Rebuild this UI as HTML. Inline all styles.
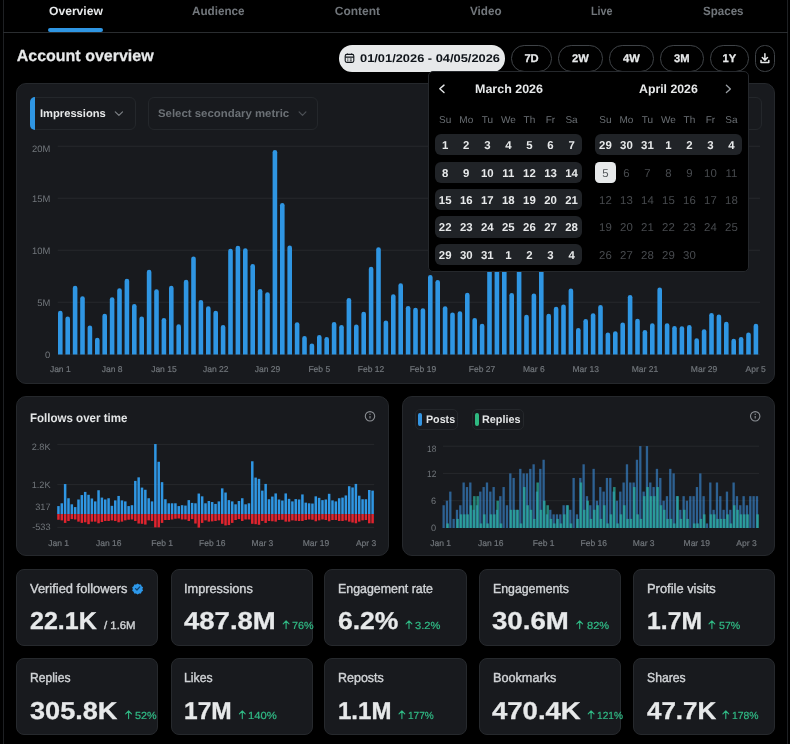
<!DOCTYPE html>
<html lang="en">
<head>
<meta charset="utf-8">
<title>Account overview</title>
<style>
html,body{margin:0;padding:0;background:#000;}
body{width:790px;height:744px;position:relative;overflow:hidden;font-family:'Liberation Sans', Arial, sans-serif;}
.b{position:absolute;box-sizing:border-box;}
.t{position:absolute;white-space:nowrap;line-height:1;transform-origin:0 50%;text-rendering:geometricPrecision;}
main{will-change:transform;}
svg{position:absolute;left:0;top:0;overflow:visible;}
</style>
</head>
<body>
<main>
<div class="b" style="left:3.00px;top:0.00px;width:1.00px;height:744.00px;background:#1e2023;"></div>
<div class="b" style="left:787.00px;top:0.00px;width:1.00px;height:744.00px;background:#1e2023;"></div>
<div class="b" style="left:3.00px;top:31.50px;width:785.00px;height:1.00px;background:#2a2d30;"></div>
<div class="b" style="left:48.40px;top:27.80px;width:54.30px;height:4.20px;background:#2f96e3;border-radius:2.1px;"></div>
<div class="b" style="left:338.70px;top:45.30px;width:166.00px;height:26.40px;background:#e7e9ea;border-radius:13.2px;"></div>
<div class="b" style="left:510.70px;top:45.30px;width:41.70px;height:26.40px;border-radius:13.2px;border:1px solid #3f4347;box-sizing:border-box;"></div>
<div class="b" style="left:557.80px;top:45.30px;width:45.10px;height:26.40px;border-radius:13.2px;border:1px solid #3f4347;box-sizing:border-box;"></div>
<div class="b" style="left:608.80px;top:45.30px;width:45.20px;height:26.40px;border-radius:13.2px;border:1px solid #3f4347;box-sizing:border-box;"></div>
<div class="b" style="left:659.90px;top:45.30px;width:43.70px;height:26.40px;border-radius:13.2px;border:1px solid #3f4347;box-sizing:border-box;"></div>
<div class="b" style="left:709.50px;top:45.30px;width:39.70px;height:26.40px;border-radius:13.2px;border:1px solid #3f4347;box-sizing:border-box;"></div>
<div class="b" style="left:755.00px;top:45.30px;width:19.90px;height:26.40px;border-radius:9.5px;border:1px solid #3f4347;box-sizing:border-box;"></div>
<div class="b" style="left:16.20px;top:83.20px;width:758.50px;height:300.60px;background:#181a1e;border-radius:10px;border:1px solid #25282c;"></div>
<div class="b" style="left:29.90px;top:97.10px;width:105.80px;height:32.70px;border-radius:6px;border:1px solid #24272b;box-sizing:border-box;"></div>
<div class="b" style="left:29.90px;top:97.10px;width:5.30px;height:32.70px;background:#2f96e3;border-radius:6px 0 0 6px;"></div>
<div class="b" style="left:148.10px;top:97.10px;width:170.10px;height:32.70px;border-radius:6px;border:1px solid #24272b;box-sizing:border-box;"></div>
<div class="b" style="left:700.00px;top:97.10px;width:61.80px;height:32.70px;border-radius:6px;border:1px solid #24272b;box-sizing:border-box;"></div>
<div class="b" style="left:16.20px;top:396.10px;width:372.60px;height:160.10px;background:#181a1e;border-radius:10px;border:1px solid #25282c;"></div>
<div class="b" style="left:402.30px;top:396.10px;width:372.40px;height:160.10px;background:#181a1e;border-radius:10px;border:1px solid #25282c;"></div>
<div class="b" style="left:415.10px;top:409.10px;width:43.40px;height:20.70px;border-radius:5px;border:1px solid #24272b;box-sizing:border-box;"></div>
<div class="b" style="left:418.40px;top:412.60px;width:3.90px;height:13.40px;background:#3495e2;border-radius:1.9px;"></div>
<div class="b" style="left:472.00px;top:409.10px;width:51.80px;height:20.70px;border-radius:5px;border:1px solid #24272b;box-sizing:border-box;"></div>
<div class="b" style="left:474.90px;top:412.60px;width:3.90px;height:13.40px;background:#2fb981;border-radius:1.9px;"></div>
<div class="b" style="left:16.10px;top:569.20px;width:141.60px;height:76.40px;background:#181a1e;border-radius:8px;border:1px solid #26292d;box-sizing:border-box;"></div>
<div class="b" style="left:171.10px;top:569.20px;width:141.50px;height:76.40px;background:#181a1e;border-radius:8px;border:1px solid #26292d;box-sizing:border-box;"></div>
<div class="b" style="left:324.40px;top:569.20px;width:142.40px;height:76.40px;background:#181a1e;border-radius:8px;border:1px solid #26292d;box-sizing:border-box;"></div>
<div class="b" style="left:478.90px;top:569.20px;width:142.20px;height:76.40px;background:#181a1e;border-radius:8px;border:1px solid #26292d;box-sizing:border-box;"></div>
<div class="b" style="left:633.00px;top:569.20px;width:141.80px;height:76.40px;background:#181a1e;border-radius:8px;border:1px solid #26292d;box-sizing:border-box;"></div>
<div class="b" style="left:16.10px;top:658.30px;width:141.60px;height:76.70px;background:#181a1e;border-radius:8px;border:1px solid #26292d;box-sizing:border-box;"></div>
<div class="b" style="left:171.10px;top:658.30px;width:141.50px;height:76.70px;background:#181a1e;border-radius:8px;border:1px solid #26292d;box-sizing:border-box;"></div>
<div class="b" style="left:324.40px;top:658.30px;width:142.40px;height:76.70px;background:#181a1e;border-radius:8px;border:1px solid #26292d;box-sizing:border-box;"></div>
<div class="b" style="left:478.90px;top:658.30px;width:142.20px;height:76.70px;background:#181a1e;border-radius:8px;border:1px solid #26292d;box-sizing:border-box;"></div>
<div class="b" style="left:633.00px;top:658.30px;width:141.80px;height:76.70px;background:#181a1e;border-radius:8px;border:1px solid #26292d;box-sizing:border-box;"></div>
<svg width="790" height="744" viewBox="0 0 790 744">
<g transform="translate(344.4,53)" fill="none" stroke="#0f1419" stroke-width="1.1"><rect x="0.8" y="1.4" width="8.6" height="8" rx="1.6"/><path d="M0.8 4.1H9.4M3 0.4V2M7.2 0.4V2" /><path d="M2.8 6H4M5.4 6H7.4M2.8 7.8H4M5.4 7.8H7.4" stroke-width="0.9"/></g>
<g transform="translate(764.9,58.3)" fill="none" stroke="#e7e9ea" stroke-width="1.5" stroke-linecap="round" stroke-linejoin="round"><path d="M0 -4.6V1.6M-2.6 -0.8L0 1.8L2.6 -0.8M-3.9 2.2V4.2H3.9V2.2"/></g>
<path d="M115.3 111.9L118.9 115.4L122.5 111.9" fill="none" stroke="#7d8186" stroke-width="1.2" stroke-linecap="round" stroke-linejoin="round"/>
<path d="M299.1 111.9L302.5 115.3L305.9 111.9" fill="none" stroke="#4c5055" stroke-width="1.2" stroke-linecap="round" stroke-linejoin="round"/>
<rect x="57.7" y="145.75" width="702.3" height="1" fill="#26282c"/>
<rect x="57.7" y="197.75" width="702.3" height="1" fill="#26282c"/>
<rect x="57.7" y="249.75" width="702.3" height="1" fill="#26282c"/>
<rect x="57.7" y="301.75" width="702.3" height="1" fill="#26282c"/>
<rect x="57.7" y="353.75" width="702.3" height="1" fill="#26282c"/>
<path d="M58.00 354.6V313.05a2.30 2.30 0 0 1 4.60 0V354.6Z" fill="#2f96e3"/>
<path d="M65.40 354.6V318.80a2.30 2.30 0 0 1 4.60 0V354.6Z" fill="#2f96e3"/>
<path d="M72.80 354.6V288.05a2.30 2.30 0 0 1 4.60 0V354.6Z" fill="#2f96e3"/>
<path d="M80.20 354.6V298.55a2.30 2.30 0 0 1 4.60 0V354.6Z" fill="#2f96e3"/>
<path d="M87.60 354.6V327.80a2.30 2.30 0 0 1 4.60 0V354.6Z" fill="#2f96e3"/>
<path d="M95.00 354.6V340.05a2.30 2.30 0 0 1 4.60 0V354.6Z" fill="#2f96e3"/>
<path d="M102.40 354.6V316.05a2.30 2.30 0 0 1 4.60 0V354.6Z" fill="#2f96e3"/>
<path d="M109.80 354.6V299.55a2.30 2.30 0 0 1 4.60 0V354.6Z" fill="#2f96e3"/>
<path d="M117.20 354.6V290.55a2.30 2.30 0 0 1 4.60 0V354.6Z" fill="#2f96e3"/>
<path d="M124.60 354.6V281.05a2.30 2.30 0 0 1 4.60 0V354.6Z" fill="#2f96e3"/>
<path d="M132.00 354.6V306.30a2.30 2.30 0 0 1 4.60 0V354.6Z" fill="#2f96e3"/>
<path d="M139.40 354.6V318.80a2.30 2.30 0 0 1 4.60 0V354.6Z" fill="#2f96e3"/>
<path d="M146.80 354.6V272.05a2.30 2.30 0 0 1 4.60 0V354.6Z" fill="#2f96e3"/>
<path d="M154.20 354.6V291.55a2.30 2.30 0 0 1 4.60 0V354.6Z" fill="#2f96e3"/>
<path d="M161.60 354.6V320.30a2.30 2.30 0 0 1 4.60 0V354.6Z" fill="#2f96e3"/>
<path d="M169.00 354.6V288.05a2.30 2.30 0 0 1 4.60 0V354.6Z" fill="#2f96e3"/>
<path d="M176.40 354.6V326.55a2.30 2.30 0 0 1 4.60 0V354.6Z" fill="#2f96e3"/>
<path d="M183.80 354.6V282.05a2.30 2.30 0 0 1 4.60 0V354.6Z" fill="#2f96e3"/>
<path d="M191.20 354.6V258.80a2.30 2.30 0 0 1 4.60 0V354.6Z" fill="#2f96e3"/>
<path d="M198.60 354.6V302.30a2.30 2.30 0 0 1 4.60 0V354.6Z" fill="#2f96e3"/>
<path d="M206.00 354.6V308.55a2.30 2.30 0 0 1 4.60 0V354.6Z" fill="#2f96e3"/>
<path d="M213.40 354.6V313.05a2.30 2.30 0 0 1 4.60 0V354.6Z" fill="#2f96e3"/>
<path d="M220.80 354.6V327.30a2.30 2.30 0 0 1 4.60 0V354.6Z" fill="#2f96e3"/>
<path d="M228.20 354.6V251.05a2.30 2.30 0 0 1 4.60 0V354.6Z" fill="#2f96e3"/>
<path d="M235.60 354.6V248.05a2.30 2.30 0 0 1 4.60 0V354.6Z" fill="#2f96e3"/>
<path d="M243.00 354.6V250.55a2.30 2.30 0 0 1 4.60 0V354.6Z" fill="#2f96e3"/>
<path d="M250.40 354.6V266.30a2.30 2.30 0 0 1 4.60 0V354.6Z" fill="#2f96e3"/>
<path d="M257.80 354.6V291.30a2.30 2.30 0 0 1 4.60 0V354.6Z" fill="#2f96e3"/>
<path d="M265.20 354.6V294.55a2.30 2.30 0 0 1 4.60 0V354.6Z" fill="#2f96e3"/>
<path d="M272.60 354.6V152.30a2.30 2.30 0 0 1 4.60 0V354.6Z" fill="#2f96e3"/>
<path d="M280.00 354.6V205.30a2.30 2.30 0 0 1 4.60 0V354.6Z" fill="#2f96e3"/>
<path d="M287.40 354.6V247.80a2.30 2.30 0 0 1 4.60 0V354.6Z" fill="#2f96e3"/>
<path d="M294.80 354.6V324.55a2.30 2.30 0 0 1 4.60 0V354.6Z" fill="#2f96e3"/>
<path d="M302.20 354.6V338.30a2.30 2.30 0 0 1 4.60 0V354.6Z" fill="#2f96e3"/>
<path d="M309.60 354.6V345.80a2.30 2.30 0 0 1 4.60 0V354.6Z" fill="#2f96e3"/>
<path d="M317.00 354.6V337.30a2.30 2.30 0 0 1 4.60 0V354.6Z" fill="#2f96e3"/>
<path d="M324.40 354.6V339.30a2.30 2.30 0 0 1 4.60 0V354.6Z" fill="#2f96e3"/>
<path d="M331.80 354.6V324.30a2.30 2.30 0 0 1 4.60 0V354.6Z" fill="#2f96e3"/>
<path d="M339.20 354.6V327.30a2.30 2.30 0 0 1 4.60 0V354.6Z" fill="#2f96e3"/>
<path d="M346.60 354.6V300.30a2.30 2.30 0 0 1 4.60 0V354.6Z" fill="#2f96e3"/>
<path d="M354.00 354.6V326.80a2.30 2.30 0 0 1 4.60 0V354.6Z" fill="#2f96e3"/>
<path d="M361.40 354.6V314.05a2.30 2.30 0 0 1 4.60 0V354.6Z" fill="#2f96e3"/>
<path d="M368.80 354.6V269.05a2.30 2.30 0 0 1 4.60 0V354.6Z" fill="#2f96e3"/>
<path d="M376.20 354.6V249.55a2.30 2.30 0 0 1 4.60 0V354.6Z" fill="#2f96e3"/>
<path d="M383.60 354.6V322.80a2.30 2.30 0 0 1 4.60 0V354.6Z" fill="#2f96e3"/>
<path d="M391.00 354.6V296.55a2.30 2.30 0 0 1 4.60 0V354.6Z" fill="#2f96e3"/>
<path d="M398.40 354.6V285.55a2.30 2.30 0 0 1 4.60 0V354.6Z" fill="#2f96e3"/>
<path d="M405.80 354.6V308.30a2.30 2.30 0 0 1 4.60 0V354.6Z" fill="#2f96e3"/>
<path d="M413.20 354.6V310.05a2.30 2.30 0 0 1 4.60 0V354.6Z" fill="#2f96e3"/>
<path d="M420.60 354.6V310.55a2.30 2.30 0 0 1 4.60 0V354.6Z" fill="#2f96e3"/>
<path d="M428.00 354.6V277.30a2.30 2.30 0 0 1 4.60 0V354.6Z" fill="#2f96e3"/>
<path d="M435.40 354.6V282.30a2.30 2.30 0 0 1 4.60 0V354.6Z" fill="#2f96e3"/>
<path d="M442.80 354.6V308.55a2.30 2.30 0 0 1 4.60 0V354.6Z" fill="#2f96e3"/>
<path d="M450.20 354.6V314.80a2.30 2.30 0 0 1 4.60 0V354.6Z" fill="#2f96e3"/>
<path d="M457.60 354.6V313.55a2.30 2.30 0 0 1 4.60 0V354.6Z" fill="#2f96e3"/>
<path d="M465.00 354.6V295.05a2.30 2.30 0 0 1 4.60 0V354.6Z" fill="#2f96e3"/>
<path d="M472.40 354.6V320.30a2.30 2.30 0 0 1 4.60 0V354.6Z" fill="#2f96e3"/>
<path d="M479.80 354.6V326.05a2.30 2.30 0 0 1 4.60 0V354.6Z" fill="#2f96e3"/>
<path d="M487.20 354.6V257.30a2.30 2.30 0 0 1 4.60 0V354.6Z" fill="#2f96e3"/>
<path d="M494.60 354.6V242.30a2.30 2.30 0 0 1 4.60 0V354.6Z" fill="#2f96e3"/>
<path d="M502.00 354.6V264.30a2.30 2.30 0 0 1 4.60 0V354.6Z" fill="#2f96e3"/>
<path d="M509.40 354.6V295.30a2.30 2.30 0 0 1 4.60 0V354.6Z" fill="#2f96e3"/>
<path d="M516.80 354.6V252.30a2.30 2.30 0 0 1 4.60 0V354.6Z" fill="#2f96e3"/>
<path d="M524.20 354.6V317.05a2.30 2.30 0 0 1 4.60 0V354.6Z" fill="#2f96e3"/>
<path d="M531.60 354.6V295.80a2.30 2.30 0 0 1 4.60 0V354.6Z" fill="#2f96e3"/>
<path d="M539.00 354.6V260.30a2.30 2.30 0 0 1 4.60 0V354.6Z" fill="#2f96e3"/>
<path d="M546.40 354.6V316.05a2.30 2.30 0 0 1 4.60 0V354.6Z" fill="#2f96e3"/>
<path d="M553.80 354.6V309.05a2.30 2.30 0 0 1 4.60 0V354.6Z" fill="#2f96e3"/>
<path d="M561.20 354.6V306.80a2.30 2.30 0 0 1 4.60 0V354.6Z" fill="#2f96e3"/>
<path d="M568.60 354.6V290.80a2.30 2.30 0 0 1 4.60 0V354.6Z" fill="#2f96e3"/>
<path d="M576.00 354.6V330.30a2.30 2.30 0 0 1 4.60 0V354.6Z" fill="#2f96e3"/>
<path d="M583.40 354.6V321.30a2.30 2.30 0 0 1 4.60 0V354.6Z" fill="#2f96e3"/>
<path d="M590.80 354.6V315.55a2.30 2.30 0 0 1 4.60 0V354.6Z" fill="#2f96e3"/>
<path d="M598.20 354.6V307.30a2.30 2.30 0 0 1 4.60 0V354.6Z" fill="#2f96e3"/>
<path d="M605.60 354.6V334.80a2.30 2.30 0 0 1 4.60 0V354.6Z" fill="#2f96e3"/>
<path d="M613.00 354.6V333.55a2.30 2.30 0 0 1 4.60 0V354.6Z" fill="#2f96e3"/>
<path d="M620.40 354.6V324.80a2.30 2.30 0 0 1 4.60 0V354.6Z" fill="#2f96e3"/>
<path d="M627.80 354.6V297.30a2.30 2.30 0 0 1 4.60 0V354.6Z" fill="#2f96e3"/>
<path d="M635.20 354.6V321.05a2.30 2.30 0 0 1 4.60 0V354.6Z" fill="#2f96e3"/>
<path d="M642.60 354.6V332.30a2.30 2.30 0 0 1 4.60 0V354.6Z" fill="#2f96e3"/>
<path d="M650.00 354.6V325.55a2.30 2.30 0 0 1 4.60 0V354.6Z" fill="#2f96e3"/>
<path d="M657.40 354.6V289.80a2.30 2.30 0 0 1 4.60 0V354.6Z" fill="#2f96e3"/>
<path d="M664.80 354.6V325.55a2.30 2.30 0 0 1 4.60 0V354.6Z" fill="#2f96e3"/>
<path d="M672.20 354.6V328.30a2.30 2.30 0 0 1 4.60 0V354.6Z" fill="#2f96e3"/>
<path d="M679.60 354.6V328.55a2.30 2.30 0 0 1 4.60 0V354.6Z" fill="#2f96e3"/>
<path d="M687.00 354.6V327.30a2.30 2.30 0 0 1 4.60 0V354.6Z" fill="#2f96e3"/>
<path d="M694.40 354.6V340.55a2.30 2.30 0 0 1 4.60 0V354.6Z" fill="#2f96e3"/>
<path d="M701.80 354.6V331.55a2.30 2.30 0 0 1 4.60 0V354.6Z" fill="#2f96e3"/>
<path d="M709.20 354.6V315.30a2.30 2.30 0 0 1 4.60 0V354.6Z" fill="#2f96e3"/>
<path d="M716.60 354.6V316.80a2.30 2.30 0 0 1 4.60 0V354.6Z" fill="#2f96e3"/>
<path d="M724.00 354.6V324.05a2.30 2.30 0 0 1 4.60 0V354.6Z" fill="#2f96e3"/>
<path d="M731.40 354.6V341.05a2.30 2.30 0 0 1 4.60 0V354.6Z" fill="#2f96e3"/>
<path d="M738.80 354.6V339.30a2.30 2.30 0 0 1 4.60 0V354.6Z" fill="#2f96e3"/>
<path d="M746.20 354.6V334.80a2.30 2.30 0 0 1 4.60 0V354.6Z" fill="#2f96e3"/>
<path d="M753.60 354.6V326.05a2.30 2.30 0 0 1 4.60 0V354.6Z" fill="#2f96e3"/>
<g transform="translate(370.0,416.3)" fill="none" stroke="#8b8f94" stroke-width="1.1"><circle r="4.7"/><path d="M0 -0.2V2.3"/><circle r="0.7" cy="-2.1" fill="#8b8f94" stroke="none"/></g>
<rect x="57.3" y="443.90" width="316.9" height="1" fill="#26282c"/>
<rect x="57.3" y="484.10" width="316.9" height="1" fill="#26282c"/>
<rect x="57.3" y="526.90" width="316.9" height="1" fill="#26282c"/>
<rect x="57.20" y="506.08" width="2.5" height="7.97" fill="#2f96e3"/>
<rect x="57.20" y="514.05" width="2.5" height="5.70" fill="#e0242f"/>
<rect x="60.54" y="503.29" width="2.5" height="10.76" fill="#2f96e3"/>
<rect x="60.54" y="514.05" width="2.5" height="6.33" fill="#e0242f"/>
<rect x="63.88" y="484.05" width="2.5" height="30.00" fill="#2f96e3"/>
<rect x="63.88" y="514.05" width="2.5" height="8.86" fill="#e0242f"/>
<rect x="67.23" y="498.23" width="2.5" height="15.82" fill="#2f96e3"/>
<rect x="67.23" y="514.05" width="2.5" height="6.96" fill="#e0242f"/>
<rect x="70.57" y="504.30" width="2.5" height="9.75" fill="#2f96e3"/>
<rect x="70.57" y="514.05" width="2.5" height="5.06" fill="#e0242f"/>
<rect x="73.91" y="507.09" width="2.5" height="6.96" fill="#2f96e3"/>
<rect x="73.91" y="514.05" width="2.5" height="5.44" fill="#e0242f"/>
<rect x="77.25" y="499.49" width="2.5" height="14.56" fill="#2f96e3"/>
<rect x="77.25" y="514.05" width="2.5" height="7.59" fill="#e0242f"/>
<rect x="80.59" y="495.06" width="2.5" height="18.99" fill="#2f96e3"/>
<rect x="80.59" y="514.05" width="2.5" height="8.86" fill="#e0242f"/>
<rect x="83.94" y="491.90" width="2.5" height="22.15" fill="#2f96e3"/>
<rect x="83.94" y="514.05" width="2.5" height="8.23" fill="#e0242f"/>
<rect x="87.28" y="494.81" width="2.5" height="19.24" fill="#2f96e3"/>
<rect x="87.28" y="514.05" width="2.5" height="10.13" fill="#e0242f"/>
<rect x="90.62" y="498.48" width="2.5" height="15.57" fill="#2f96e3"/>
<rect x="90.62" y="514.05" width="2.5" height="7.59" fill="#e0242f"/>
<rect x="93.96" y="501.39" width="2.5" height="12.66" fill="#2f96e3"/>
<rect x="93.96" y="514.05" width="2.5" height="7.59" fill="#e0242f"/>
<rect x="97.30" y="490.25" width="2.5" height="23.80" fill="#2f96e3"/>
<rect x="97.30" y="514.05" width="2.5" height="9.24" fill="#e0242f"/>
<rect x="100.65" y="497.59" width="2.5" height="16.46" fill="#2f96e3"/>
<rect x="100.65" y="514.05" width="2.5" height="7.97" fill="#e0242f"/>
<rect x="103.99" y="499.49" width="2.5" height="14.56" fill="#2f96e3"/>
<rect x="103.99" y="514.05" width="2.5" height="6.96" fill="#e0242f"/>
<rect x="107.33" y="498.23" width="2.5" height="15.82" fill="#2f96e3"/>
<rect x="107.33" y="514.05" width="2.5" height="6.96" fill="#e0242f"/>
<rect x="110.67" y="505.82" width="2.5" height="8.23" fill="#2f96e3"/>
<rect x="110.67" y="514.05" width="2.5" height="6.33" fill="#e0242f"/>
<rect x="114.01" y="500.38" width="2.5" height="13.67" fill="#2f96e3"/>
<rect x="114.01" y="514.05" width="2.5" height="6.96" fill="#e0242f"/>
<rect x="117.36" y="495.95" width="2.5" height="18.10" fill="#2f96e3"/>
<rect x="117.36" y="514.05" width="2.5" height="8.23" fill="#e0242f"/>
<rect x="120.70" y="500.38" width="2.5" height="13.67" fill="#2f96e3"/>
<rect x="120.70" y="514.05" width="2.5" height="7.59" fill="#e0242f"/>
<rect x="124.04" y="501.39" width="2.5" height="12.66" fill="#2f96e3"/>
<rect x="124.04" y="514.05" width="2.5" height="6.33" fill="#e0242f"/>
<rect x="127.38" y="506.08" width="2.5" height="7.97" fill="#2f96e3"/>
<rect x="127.38" y="514.05" width="2.5" height="5.70" fill="#e0242f"/>
<rect x="130.72" y="505.19" width="2.5" height="8.86" fill="#2f96e3"/>
<rect x="130.72" y="514.05" width="2.5" height="5.44" fill="#e0242f"/>
<rect x="134.07" y="480.89" width="2.5" height="33.16" fill="#2f96e3"/>
<rect x="134.07" y="514.05" width="2.5" height="6.96" fill="#e0242f"/>
<rect x="137.41" y="477.34" width="2.5" height="36.71" fill="#2f96e3"/>
<rect x="137.41" y="514.05" width="2.5" height="9.49" fill="#e0242f"/>
<rect x="140.75" y="487.59" width="2.5" height="26.46" fill="#2f96e3"/>
<rect x="140.75" y="514.05" width="2.5" height="9.75" fill="#e0242f"/>
<rect x="144.09" y="489.75" width="2.5" height="24.30" fill="#2f96e3"/>
<rect x="144.09" y="514.05" width="2.5" height="10.51" fill="#e0242f"/>
<rect x="147.43" y="498.23" width="2.5" height="15.82" fill="#2f96e3"/>
<rect x="147.43" y="514.05" width="2.5" height="6.33" fill="#e0242f"/>
<rect x="150.78" y="501.39" width="2.5" height="12.66" fill="#2f96e3"/>
<rect x="150.78" y="514.05" width="2.5" height="6.96" fill="#e0242f"/>
<rect x="154.12" y="444.05" width="2.5" height="70.00" fill="#2f96e3"/>
<rect x="154.12" y="514.05" width="2.5" height="13.29" fill="#e0242f"/>
<rect x="157.46" y="461.77" width="2.5" height="52.28" fill="#2f96e3"/>
<rect x="157.46" y="514.05" width="2.5" height="13.29" fill="#e0242f"/>
<rect x="160.80" y="482.15" width="2.5" height="31.90" fill="#2f96e3"/>
<rect x="160.80" y="514.05" width="2.5" height="8.86" fill="#e0242f"/>
<rect x="164.14" y="499.24" width="2.5" height="14.81" fill="#2f96e3"/>
<rect x="164.14" y="514.05" width="2.5" height="5.95" fill="#e0242f"/>
<rect x="167.49" y="503.29" width="2.5" height="10.76" fill="#2f96e3"/>
<rect x="167.49" y="514.05" width="2.5" height="5.95" fill="#e0242f"/>
<rect x="170.83" y="503.29" width="2.5" height="10.76" fill="#2f96e3"/>
<rect x="170.83" y="514.05" width="2.5" height="5.44" fill="#e0242f"/>
<rect x="174.17" y="503.29" width="2.5" height="10.76" fill="#2f96e3"/>
<rect x="174.17" y="514.05" width="2.5" height="4.68" fill="#e0242f"/>
<rect x="177.51" y="506.08" width="2.5" height="7.97" fill="#2f96e3"/>
<rect x="177.51" y="514.05" width="2.5" height="4.43" fill="#e0242f"/>
<rect x="180.85" y="505.19" width="2.5" height="8.86" fill="#2f96e3"/>
<rect x="180.85" y="514.05" width="2.5" height="5.44" fill="#e0242f"/>
<rect x="184.20" y="505.57" width="2.5" height="8.48" fill="#2f96e3"/>
<rect x="184.20" y="514.05" width="2.5" height="5.44" fill="#e0242f"/>
<rect x="187.54" y="500.13" width="2.5" height="13.92" fill="#2f96e3"/>
<rect x="187.54" y="514.05" width="2.5" height="6.96" fill="#e0242f"/>
<rect x="190.88" y="502.91" width="2.5" height="11.14" fill="#2f96e3"/>
<rect x="190.88" y="514.05" width="2.5" height="5.06" fill="#e0242f"/>
<rect x="194.22" y="503.29" width="2.5" height="10.76" fill="#2f96e3"/>
<rect x="194.22" y="514.05" width="2.5" height="9.49" fill="#e0242f"/>
<rect x="197.56" y="493.54" width="2.5" height="20.51" fill="#2f96e3"/>
<rect x="197.56" y="514.05" width="2.5" height="13.54" fill="#e0242f"/>
<rect x="200.91" y="496.33" width="2.5" height="17.72" fill="#2f96e3"/>
<rect x="200.91" y="514.05" width="2.5" height="8.86" fill="#e0242f"/>
<rect x="204.25" y="503.29" width="2.5" height="10.76" fill="#2f96e3"/>
<rect x="204.25" y="514.05" width="2.5" height="6.33" fill="#e0242f"/>
<rect x="207.59" y="501.01" width="2.5" height="13.04" fill="#2f96e3"/>
<rect x="207.59" y="514.05" width="2.5" height="7.59" fill="#e0242f"/>
<rect x="210.93" y="502.03" width="2.5" height="12.03" fill="#2f96e3"/>
<rect x="210.93" y="514.05" width="2.5" height="7.34" fill="#e0242f"/>
<rect x="214.27" y="503.92" width="2.5" height="10.13" fill="#2f96e3"/>
<rect x="214.27" y="514.05" width="2.5" height="6.96" fill="#e0242f"/>
<rect x="217.62" y="501.39" width="2.5" height="12.66" fill="#2f96e3"/>
<rect x="217.62" y="514.05" width="2.5" height="6.33" fill="#e0242f"/>
<rect x="220.96" y="488.35" width="2.5" height="25.70" fill="#2f96e3"/>
<rect x="220.96" y="514.05" width="2.5" height="9.75" fill="#e0242f"/>
<rect x="224.30" y="492.53" width="2.5" height="21.52" fill="#2f96e3"/>
<rect x="224.30" y="514.05" width="2.5" height="11.39" fill="#e0242f"/>
<rect x="227.64" y="500.13" width="2.5" height="13.92" fill="#2f96e3"/>
<rect x="227.64" y="514.05" width="2.5" height="11.01" fill="#e0242f"/>
<rect x="230.98" y="501.39" width="2.5" height="12.66" fill="#2f96e3"/>
<rect x="230.98" y="514.05" width="2.5" height="8.86" fill="#e0242f"/>
<rect x="234.33" y="504.30" width="2.5" height="9.75" fill="#2f96e3"/>
<rect x="234.33" y="514.05" width="2.5" height="5.95" fill="#e0242f"/>
<rect x="237.67" y="501.01" width="2.5" height="13.04" fill="#2f96e3"/>
<rect x="237.67" y="514.05" width="2.5" height="5.06" fill="#e0242f"/>
<rect x="241.01" y="498.23" width="2.5" height="15.82" fill="#2f96e3"/>
<rect x="241.01" y="514.05" width="2.5" height="6.96" fill="#e0242f"/>
<rect x="244.35" y="504.30" width="2.5" height="9.75" fill="#2f96e3"/>
<rect x="244.35" y="514.05" width="2.5" height="5.44" fill="#e0242f"/>
<rect x="247.69" y="503.29" width="2.5" height="10.76" fill="#2f96e3"/>
<rect x="247.69" y="514.05" width="2.5" height="5.44" fill="#e0242f"/>
<rect x="251.04" y="461.27" width="2.5" height="52.78" fill="#2f96e3"/>
<rect x="251.04" y="514.05" width="2.5" height="9.75" fill="#e0242f"/>
<rect x="254.38" y="477.59" width="2.5" height="36.46" fill="#2f96e3"/>
<rect x="254.38" y="514.05" width="2.5" height="10.13" fill="#e0242f"/>
<rect x="257.72" y="478.86" width="2.5" height="35.19" fill="#2f96e3"/>
<rect x="257.72" y="514.05" width="2.5" height="10.76" fill="#e0242f"/>
<rect x="261.06" y="490.63" width="2.5" height="23.42" fill="#2f96e3"/>
<rect x="261.06" y="514.05" width="2.5" height="6.96" fill="#e0242f"/>
<rect x="264.40" y="483.92" width="2.5" height="30.13" fill="#2f96e3"/>
<rect x="264.40" y="514.05" width="2.5" height="8.86" fill="#e0242f"/>
<rect x="267.75" y="499.24" width="2.5" height="14.81" fill="#2f96e3"/>
<rect x="267.75" y="514.05" width="2.5" height="6.96" fill="#e0242f"/>
<rect x="271.09" y="496.58" width="2.5" height="17.47" fill="#2f96e3"/>
<rect x="271.09" y="514.05" width="2.5" height="7.22" fill="#e0242f"/>
<rect x="274.43" y="493.42" width="2.5" height="20.63" fill="#2f96e3"/>
<rect x="274.43" y="514.05" width="2.5" height="7.59" fill="#e0242f"/>
<rect x="277.77" y="499.49" width="2.5" height="14.56" fill="#2f96e3"/>
<rect x="277.77" y="514.05" width="2.5" height="5.95" fill="#e0242f"/>
<rect x="281.11" y="500.51" width="2.5" height="13.54" fill="#2f96e3"/>
<rect x="281.11" y="514.05" width="2.5" height="5.70" fill="#e0242f"/>
<rect x="284.46" y="493.42" width="2.5" height="20.63" fill="#2f96e3"/>
<rect x="284.46" y="514.05" width="2.5" height="7.59" fill="#e0242f"/>
<rect x="287.80" y="498.86" width="2.5" height="15.19" fill="#2f96e3"/>
<rect x="287.80" y="514.05" width="2.5" height="7.59" fill="#e0242f"/>
<rect x="291.14" y="501.39" width="2.5" height="12.66" fill="#2f96e3"/>
<rect x="291.14" y="514.05" width="2.5" height="6.33" fill="#e0242f"/>
<rect x="294.48" y="499.11" width="2.5" height="14.94" fill="#2f96e3"/>
<rect x="294.48" y="514.05" width="2.5" height="6.71" fill="#e0242f"/>
<rect x="297.82" y="499.49" width="2.5" height="14.56" fill="#2f96e3"/>
<rect x="297.82" y="514.05" width="2.5" height="6.96" fill="#e0242f"/>
<rect x="301.17" y="494.43" width="2.5" height="19.62" fill="#2f96e3"/>
<rect x="301.17" y="514.05" width="2.5" height="6.96" fill="#e0242f"/>
<rect x="304.51" y="502.66" width="2.5" height="11.39" fill="#2f96e3"/>
<rect x="304.51" y="514.05" width="2.5" height="5.95" fill="#e0242f"/>
<rect x="307.85" y="503.29" width="2.5" height="10.76" fill="#2f96e3"/>
<rect x="307.85" y="514.05" width="2.5" height="5.44" fill="#e0242f"/>
<rect x="311.19" y="503.54" width="2.5" height="10.51" fill="#2f96e3"/>
<rect x="311.19" y="514.05" width="2.5" height="5.70" fill="#e0242f"/>
<rect x="314.53" y="496.33" width="2.5" height="17.72" fill="#2f96e3"/>
<rect x="314.53" y="514.05" width="2.5" height="7.22" fill="#e0242f"/>
<rect x="317.88" y="497.85" width="2.5" height="16.20" fill="#2f96e3"/>
<rect x="317.88" y="514.05" width="2.5" height="6.33" fill="#e0242f"/>
<rect x="321.22" y="500.13" width="2.5" height="13.92" fill="#2f96e3"/>
<rect x="321.22" y="514.05" width="2.5" height="5.44" fill="#e0242f"/>
<rect x="324.56" y="499.49" width="2.5" height="14.56" fill="#2f96e3"/>
<rect x="324.56" y="514.05" width="2.5" height="5.95" fill="#e0242f"/>
<rect x="327.90" y="493.80" width="2.5" height="20.25" fill="#2f96e3"/>
<rect x="327.90" y="514.05" width="2.5" height="7.22" fill="#e0242f"/>
<rect x="331.24" y="500.38" width="2.5" height="13.67" fill="#2f96e3"/>
<rect x="331.24" y="514.05" width="2.5" height="5.95" fill="#e0242f"/>
<rect x="334.59" y="501.39" width="2.5" height="12.66" fill="#2f96e3"/>
<rect x="334.59" y="514.05" width="2.5" height="5.95" fill="#e0242f"/>
<rect x="337.93" y="498.23" width="2.5" height="15.82" fill="#2f96e3"/>
<rect x="337.93" y="514.05" width="2.5" height="6.96" fill="#e0242f"/>
<rect x="341.27" y="497.59" width="2.5" height="16.46" fill="#2f96e3"/>
<rect x="341.27" y="514.05" width="2.5" height="6.96" fill="#e0242f"/>
<rect x="344.61" y="495.44" width="2.5" height="18.61" fill="#2f96e3"/>
<rect x="344.61" y="514.05" width="2.5" height="6.33" fill="#e0242f"/>
<rect x="347.95" y="486.20" width="2.5" height="27.85" fill="#2f96e3"/>
<rect x="347.95" y="514.05" width="2.5" height="7.59" fill="#e0242f"/>
<rect x="351.30" y="487.47" width="2.5" height="26.58" fill="#2f96e3"/>
<rect x="351.30" y="514.05" width="2.5" height="8.48" fill="#e0242f"/>
<rect x="354.64" y="483.92" width="2.5" height="30.13" fill="#2f96e3"/>
<rect x="354.64" y="514.05" width="2.5" height="9.24" fill="#e0242f"/>
<rect x="357.98" y="495.70" width="2.5" height="18.35" fill="#2f96e3"/>
<rect x="357.98" y="514.05" width="2.5" height="7.59" fill="#e0242f"/>
<rect x="361.32" y="499.24" width="2.5" height="14.81" fill="#2f96e3"/>
<rect x="361.32" y="514.05" width="2.5" height="6.33" fill="#e0242f"/>
<rect x="364.66" y="499.24" width="2.5" height="14.81" fill="#2f96e3"/>
<rect x="364.66" y="514.05" width="2.5" height="5.95" fill="#e0242f"/>
<rect x="368.01" y="490.00" width="2.5" height="24.05" fill="#2f96e3"/>
<rect x="368.01" y="514.05" width="2.5" height="9.24" fill="#e0242f"/>
<rect x="371.35" y="490.63" width="2.5" height="23.42" fill="#2f96e3"/>
<rect x="371.35" y="514.05" width="2.5" height="9.24" fill="#e0242f"/>
<g transform="translate(755.2,416.3)" fill="none" stroke="#8b8f94" stroke-width="1.1"><circle r="4.7"/><path d="M0 -0.2V2.3"/><circle r="0.7" cy="-2.1" fill="#8b8f94" stroke="none"/></g>
<rect x="443" y="445.70" width="316.0" height="1" fill="#26282c"/>
<rect x="443" y="472.90" width="316.0" height="1" fill="#26282c"/>
<rect x="443" y="500.20" width="316.0" height="1" fill="#26282c"/>
<rect x="442.50" y="505.25" width="2.3" height="22.75" fill="#3a8ad4" fill-opacity="0.64"/>
<rect x="445.83" y="500.70" width="2.3" height="27.30" fill="#3a8ad4" fill-opacity="0.64"/>
<rect x="446.43" y="523.45" width="2.5" height="4.55" fill="#2cc0a8" fill-opacity="0.66"/>
<rect x="449.17" y="491.60" width="2.3" height="36.40" fill="#3a8ad4" fill-opacity="0.64"/>
<rect x="452.50" y="518.90" width="2.3" height="9.10" fill="#3a8ad4" fill-opacity="0.64"/>
<rect x="455.83" y="509.80" width="2.3" height="18.20" fill="#3a8ad4" fill-opacity="0.64"/>
<rect x="456.43" y="518.90" width="2.5" height="9.10" fill="#2cc0a8" fill-opacity="0.66"/>
<rect x="459.17" y="505.25" width="2.3" height="22.75" fill="#3a8ad4" fill-opacity="0.64"/>
<rect x="459.77" y="514.35" width="2.5" height="13.65" fill="#2cc0a8" fill-opacity="0.66"/>
<rect x="462.50" y="482.50" width="2.3" height="45.50" fill="#3a8ad4" fill-opacity="0.64"/>
<rect x="463.10" y="514.35" width="2.5" height="13.65" fill="#2cc0a8" fill-opacity="0.66"/>
<rect x="465.83" y="487.05" width="2.3" height="40.95" fill="#3a8ad4" fill-opacity="0.64"/>
<rect x="466.43" y="514.35" width="2.5" height="13.65" fill="#2cc0a8" fill-opacity="0.66"/>
<rect x="469.16" y="482.50" width="2.3" height="45.50" fill="#3a8ad4" fill-opacity="0.64"/>
<rect x="469.76" y="505.25" width="2.5" height="22.75" fill="#2cc0a8" fill-opacity="0.66"/>
<rect x="472.50" y="509.80" width="2.3" height="18.20" fill="#3a8ad4" fill-opacity="0.64"/>
<rect x="473.10" y="496.15" width="2.5" height="31.85" fill="#2cc0a8" fill-opacity="0.66"/>
<rect x="475.83" y="505.25" width="2.3" height="22.75" fill="#3a8ad4" fill-opacity="0.64"/>
<rect x="476.43" y="496.15" width="2.5" height="31.85" fill="#2cc0a8" fill-opacity="0.66"/>
<rect x="479.16" y="491.60" width="2.3" height="36.40" fill="#3a8ad4" fill-opacity="0.64"/>
<rect x="479.76" y="523.45" width="2.5" height="4.55" fill="#2cc0a8" fill-opacity="0.66"/>
<rect x="482.50" y="487.05" width="2.3" height="40.95" fill="#3a8ad4" fill-opacity="0.64"/>
<rect x="483.10" y="514.35" width="2.5" height="13.65" fill="#2cc0a8" fill-opacity="0.66"/>
<rect x="485.83" y="482.50" width="2.3" height="45.50" fill="#3a8ad4" fill-opacity="0.64"/>
<rect x="486.43" y="523.45" width="2.5" height="4.55" fill="#2cc0a8" fill-opacity="0.66"/>
<rect x="489.16" y="491.60" width="2.3" height="36.40" fill="#3a8ad4" fill-opacity="0.64"/>
<rect x="489.76" y="514.35" width="2.5" height="13.65" fill="#2cc0a8" fill-opacity="0.66"/>
<rect x="492.50" y="487.05" width="2.3" height="40.95" fill="#3a8ad4" fill-opacity="0.64"/>
<rect x="493.10" y="514.35" width="2.5" height="13.65" fill="#2cc0a8" fill-opacity="0.66"/>
<rect x="495.83" y="509.80" width="2.3" height="18.20" fill="#3a8ad4" fill-opacity="0.64"/>
<rect x="496.43" y="500.70" width="2.5" height="27.30" fill="#2cc0a8" fill-opacity="0.66"/>
<rect x="499.16" y="496.15" width="2.3" height="31.85" fill="#3a8ad4" fill-opacity="0.64"/>
<rect x="499.76" y="523.45" width="2.5" height="4.55" fill="#2cc0a8" fill-opacity="0.66"/>
<rect x="502.49" y="487.05" width="2.3" height="40.95" fill="#3a8ad4" fill-opacity="0.64"/>
<rect x="505.83" y="505.25" width="2.3" height="22.75" fill="#3a8ad4" fill-opacity="0.64"/>
<rect x="509.16" y="473.40" width="2.3" height="54.60" fill="#3a8ad4" fill-opacity="0.64"/>
<rect x="509.76" y="509.80" width="2.5" height="18.20" fill="#2cc0a8" fill-opacity="0.66"/>
<rect x="512.49" y="477.95" width="2.3" height="50.05" fill="#3a8ad4" fill-opacity="0.64"/>
<rect x="513.09" y="509.80" width="2.5" height="18.20" fill="#2cc0a8" fill-opacity="0.66"/>
<rect x="515.83" y="509.80" width="2.3" height="18.20" fill="#3a8ad4" fill-opacity="0.64"/>
<rect x="516.43" y="509.80" width="2.5" height="18.20" fill="#2cc0a8" fill-opacity="0.66"/>
<rect x="519.16" y="468.85" width="2.3" height="59.15" fill="#3a8ad4" fill-opacity="0.64"/>
<rect x="519.76" y="523.45" width="2.5" height="4.55" fill="#2cc0a8" fill-opacity="0.66"/>
<rect x="522.49" y="473.40" width="2.3" height="54.60" fill="#3a8ad4" fill-opacity="0.64"/>
<rect x="523.09" y="487.05" width="2.5" height="40.95" fill="#2cc0a8" fill-opacity="0.66"/>
<rect x="525.83" y="473.40" width="2.3" height="54.60" fill="#3a8ad4" fill-opacity="0.64"/>
<rect x="526.42" y="505.25" width="2.5" height="22.75" fill="#2cc0a8" fill-opacity="0.66"/>
<rect x="529.16" y="468.85" width="2.3" height="59.15" fill="#3a8ad4" fill-opacity="0.64"/>
<rect x="529.76" y="509.80" width="2.5" height="18.20" fill="#2cc0a8" fill-opacity="0.66"/>
<rect x="532.49" y="464.30" width="2.3" height="63.70" fill="#3a8ad4" fill-opacity="0.64"/>
<rect x="533.09" y="518.90" width="2.5" height="9.10" fill="#2cc0a8" fill-opacity="0.66"/>
<rect x="535.82" y="491.60" width="2.3" height="36.40" fill="#3a8ad4" fill-opacity="0.64"/>
<rect x="536.42" y="482.50" width="2.5" height="45.50" fill="#2cc0a8" fill-opacity="0.66"/>
<rect x="539.16" y="468.85" width="2.3" height="59.15" fill="#3a8ad4" fill-opacity="0.64"/>
<rect x="539.76" y="509.80" width="2.5" height="18.20" fill="#2cc0a8" fill-opacity="0.66"/>
<rect x="542.49" y="459.75" width="2.3" height="68.25" fill="#3a8ad4" fill-opacity="0.64"/>
<rect x="543.09" y="500.70" width="2.5" height="27.30" fill="#2cc0a8" fill-opacity="0.66"/>
<rect x="545.82" y="514.35" width="2.3" height="13.65" fill="#3a8ad4" fill-opacity="0.64"/>
<rect x="546.42" y="505.25" width="2.5" height="22.75" fill="#2cc0a8" fill-opacity="0.66"/>
<rect x="549.16" y="509.80" width="2.3" height="18.20" fill="#3a8ad4" fill-opacity="0.64"/>
<rect x="549.76" y="518.90" width="2.5" height="9.10" fill="#2cc0a8" fill-opacity="0.66"/>
<rect x="552.49" y="514.35" width="2.3" height="13.65" fill="#3a8ad4" fill-opacity="0.64"/>
<rect x="553.09" y="523.45" width="2.5" height="4.55" fill="#2cc0a8" fill-opacity="0.66"/>
<rect x="555.82" y="514.35" width="2.3" height="13.65" fill="#3a8ad4" fill-opacity="0.64"/>
<rect x="556.42" y="518.90" width="2.5" height="9.10" fill="#2cc0a8" fill-opacity="0.66"/>
<rect x="559.16" y="514.35" width="2.3" height="13.65" fill="#3a8ad4" fill-opacity="0.64"/>
<rect x="559.75" y="523.45" width="2.5" height="4.55" fill="#2cc0a8" fill-opacity="0.66"/>
<rect x="562.49" y="505.25" width="2.3" height="22.75" fill="#3a8ad4" fill-opacity="0.64"/>
<rect x="563.09" y="514.35" width="2.5" height="13.65" fill="#2cc0a8" fill-opacity="0.66"/>
<rect x="565.82" y="505.25" width="2.3" height="22.75" fill="#3a8ad4" fill-opacity="0.64"/>
<rect x="566.42" y="505.25" width="2.5" height="22.75" fill="#2cc0a8" fill-opacity="0.66"/>
<rect x="569.15" y="509.80" width="2.3" height="18.20" fill="#3a8ad4" fill-opacity="0.64"/>
<rect x="569.75" y="523.45" width="2.5" height="4.55" fill="#2cc0a8" fill-opacity="0.66"/>
<rect x="572.49" y="477.95" width="2.3" height="50.05" fill="#3a8ad4" fill-opacity="0.64"/>
<rect x="575.82" y="514.35" width="2.3" height="13.65" fill="#3a8ad4" fill-opacity="0.64"/>
<rect x="576.42" y="518.90" width="2.5" height="9.10" fill="#2cc0a8" fill-opacity="0.66"/>
<rect x="579.15" y="477.95" width="2.3" height="50.05" fill="#3a8ad4" fill-opacity="0.64"/>
<rect x="579.75" y="482.50" width="2.5" height="45.50" fill="#2cc0a8" fill-opacity="0.66"/>
<rect x="582.49" y="464.30" width="2.3" height="63.70" fill="#3a8ad4" fill-opacity="0.64"/>
<rect x="583.09" y="509.80" width="2.5" height="18.20" fill="#2cc0a8" fill-opacity="0.66"/>
<rect x="585.82" y="496.15" width="2.3" height="31.85" fill="#3a8ad4" fill-opacity="0.64"/>
<rect x="586.42" y="500.70" width="2.5" height="27.30" fill="#2cc0a8" fill-opacity="0.66"/>
<rect x="589.15" y="505.25" width="2.3" height="22.75" fill="#3a8ad4" fill-opacity="0.64"/>
<rect x="589.75" y="518.90" width="2.5" height="9.10" fill="#2cc0a8" fill-opacity="0.66"/>
<rect x="592.49" y="468.85" width="2.3" height="59.15" fill="#3a8ad4" fill-opacity="0.64"/>
<rect x="593.09" y="509.80" width="2.5" height="18.20" fill="#2cc0a8" fill-opacity="0.66"/>
<rect x="595.82" y="500.70" width="2.3" height="27.30" fill="#3a8ad4" fill-opacity="0.64"/>
<rect x="596.42" y="505.25" width="2.5" height="22.75" fill="#2cc0a8" fill-opacity="0.66"/>
<rect x="599.15" y="487.05" width="2.3" height="40.95" fill="#3a8ad4" fill-opacity="0.64"/>
<rect x="599.75" y="518.90" width="2.5" height="9.10" fill="#2cc0a8" fill-opacity="0.66"/>
<rect x="602.48" y="491.60" width="2.3" height="36.40" fill="#3a8ad4" fill-opacity="0.64"/>
<rect x="603.08" y="505.25" width="2.5" height="22.75" fill="#2cc0a8" fill-opacity="0.66"/>
<rect x="605.82" y="477.95" width="2.3" height="50.05" fill="#3a8ad4" fill-opacity="0.64"/>
<rect x="606.42" y="523.45" width="2.5" height="4.55" fill="#2cc0a8" fill-opacity="0.66"/>
<rect x="609.15" y="477.95" width="2.3" height="50.05" fill="#3a8ad4" fill-opacity="0.64"/>
<rect x="609.75" y="514.35" width="2.5" height="13.65" fill="#2cc0a8" fill-opacity="0.66"/>
<rect x="612.48" y="491.60" width="2.3" height="36.40" fill="#3a8ad4" fill-opacity="0.64"/>
<rect x="613.08" y="487.05" width="2.5" height="40.95" fill="#2cc0a8" fill-opacity="0.66"/>
<rect x="615.82" y="500.70" width="2.3" height="27.30" fill="#3a8ad4" fill-opacity="0.64"/>
<rect x="616.42" y="523.45" width="2.5" height="4.55" fill="#2cc0a8" fill-opacity="0.66"/>
<rect x="619.15" y="491.60" width="2.3" height="36.40" fill="#3a8ad4" fill-opacity="0.64"/>
<rect x="619.75" y="514.35" width="2.5" height="13.65" fill="#2cc0a8" fill-opacity="0.66"/>
<rect x="622.48" y="482.50" width="2.3" height="45.50" fill="#3a8ad4" fill-opacity="0.64"/>
<rect x="623.08" y="505.25" width="2.5" height="22.75" fill="#2cc0a8" fill-opacity="0.66"/>
<rect x="625.82" y="464.30" width="2.3" height="63.70" fill="#3a8ad4" fill-opacity="0.64"/>
<rect x="626.41" y="518.90" width="2.5" height="9.10" fill="#2cc0a8" fill-opacity="0.66"/>
<rect x="629.15" y="482.50" width="2.3" height="45.50" fill="#3a8ad4" fill-opacity="0.64"/>
<rect x="629.75" y="518.90" width="2.5" height="9.10" fill="#2cc0a8" fill-opacity="0.66"/>
<rect x="632.48" y="482.50" width="2.3" height="45.50" fill="#3a8ad4" fill-opacity="0.64"/>
<rect x="633.08" y="487.05" width="2.5" height="40.95" fill="#2cc0a8" fill-opacity="0.66"/>
<rect x="635.81" y="459.75" width="2.3" height="68.25" fill="#3a8ad4" fill-opacity="0.64"/>
<rect x="636.41" y="514.35" width="2.5" height="13.65" fill="#2cc0a8" fill-opacity="0.66"/>
<rect x="639.15" y="446.10" width="2.3" height="81.90" fill="#3a8ad4" fill-opacity="0.64"/>
<rect x="639.75" y="518.90" width="2.5" height="9.10" fill="#2cc0a8" fill-opacity="0.66"/>
<rect x="642.48" y="491.60" width="2.3" height="36.40" fill="#3a8ad4" fill-opacity="0.64"/>
<rect x="643.08" y="496.15" width="2.5" height="31.85" fill="#2cc0a8" fill-opacity="0.66"/>
<rect x="645.81" y="446.10" width="2.3" height="81.90" fill="#3a8ad4" fill-opacity="0.64"/>
<rect x="646.41" y="487.05" width="2.5" height="40.95" fill="#2cc0a8" fill-opacity="0.66"/>
<rect x="649.15" y="482.50" width="2.3" height="45.50" fill="#3a8ad4" fill-opacity="0.64"/>
<rect x="649.75" y="496.15" width="2.5" height="31.85" fill="#2cc0a8" fill-opacity="0.66"/>
<rect x="652.48" y="487.05" width="2.3" height="40.95" fill="#3a8ad4" fill-opacity="0.64"/>
<rect x="653.08" y="496.15" width="2.5" height="31.85" fill="#2cc0a8" fill-opacity="0.66"/>
<rect x="655.81" y="468.85" width="2.3" height="59.15" fill="#3a8ad4" fill-opacity="0.64"/>
<rect x="656.41" y="487.05" width="2.5" height="40.95" fill="#2cc0a8" fill-opacity="0.66"/>
<rect x="659.15" y="477.95" width="2.3" height="50.05" fill="#3a8ad4" fill-opacity="0.64"/>
<rect x="659.75" y="505.25" width="2.5" height="22.75" fill="#2cc0a8" fill-opacity="0.66"/>
<rect x="662.48" y="500.70" width="2.3" height="27.30" fill="#3a8ad4" fill-opacity="0.64"/>
<rect x="663.08" y="509.80" width="2.5" height="18.20" fill="#2cc0a8" fill-opacity="0.66"/>
<rect x="665.81" y="496.15" width="2.3" height="31.85" fill="#3a8ad4" fill-opacity="0.64"/>
<rect x="666.41" y="518.90" width="2.5" height="9.10" fill="#2cc0a8" fill-opacity="0.66"/>
<rect x="669.14" y="468.85" width="2.3" height="59.15" fill="#3a8ad4" fill-opacity="0.64"/>
<rect x="669.74" y="518.90" width="2.5" height="9.10" fill="#2cc0a8" fill-opacity="0.66"/>
<rect x="672.48" y="473.40" width="2.3" height="54.60" fill="#3a8ad4" fill-opacity="0.64"/>
<rect x="673.08" y="523.45" width="2.5" height="4.55" fill="#2cc0a8" fill-opacity="0.66"/>
<rect x="675.81" y="496.15" width="2.3" height="31.85" fill="#3a8ad4" fill-opacity="0.64"/>
<rect x="676.41" y="496.15" width="2.5" height="31.85" fill="#2cc0a8" fill-opacity="0.66"/>
<rect x="679.14" y="509.80" width="2.3" height="18.20" fill="#3a8ad4" fill-opacity="0.64"/>
<rect x="679.74" y="518.90" width="2.5" height="9.10" fill="#2cc0a8" fill-opacity="0.66"/>
<rect x="682.48" y="496.15" width="2.3" height="31.85" fill="#3a8ad4" fill-opacity="0.64"/>
<rect x="683.08" y="509.80" width="2.5" height="18.20" fill="#2cc0a8" fill-opacity="0.66"/>
<rect x="685.81" y="500.70" width="2.3" height="27.30" fill="#3a8ad4" fill-opacity="0.64"/>
<rect x="686.41" y="518.90" width="2.5" height="9.10" fill="#2cc0a8" fill-opacity="0.66"/>
<rect x="689.14" y="496.15" width="2.3" height="31.85" fill="#3a8ad4" fill-opacity="0.64"/>
<rect x="692.48" y="496.15" width="2.3" height="31.85" fill="#3a8ad4" fill-opacity="0.64"/>
<rect x="693.08" y="523.45" width="2.5" height="4.55" fill="#2cc0a8" fill-opacity="0.66"/>
<rect x="695.81" y="487.05" width="2.3" height="40.95" fill="#3a8ad4" fill-opacity="0.64"/>
<rect x="696.41" y="523.45" width="2.5" height="4.55" fill="#2cc0a8" fill-opacity="0.66"/>
<rect x="699.14" y="473.40" width="2.3" height="54.60" fill="#3a8ad4" fill-opacity="0.64"/>
<rect x="699.74" y="518.90" width="2.5" height="9.10" fill="#2cc0a8" fill-opacity="0.66"/>
<rect x="702.47" y="496.15" width="2.3" height="31.85" fill="#3a8ad4" fill-opacity="0.64"/>
<rect x="703.07" y="514.35" width="2.5" height="13.65" fill="#2cc0a8" fill-opacity="0.66"/>
<rect x="705.81" y="523.45" width="2.3" height="4.55" fill="#3a8ad4" fill-opacity="0.64"/>
<rect x="709.14" y="482.50" width="2.3" height="45.50" fill="#3a8ad4" fill-opacity="0.64"/>
<rect x="709.74" y="514.35" width="2.5" height="13.65" fill="#2cc0a8" fill-opacity="0.66"/>
<rect x="712.47" y="509.80" width="2.3" height="18.20" fill="#3a8ad4" fill-opacity="0.64"/>
<rect x="713.07" y="514.35" width="2.5" height="13.65" fill="#2cc0a8" fill-opacity="0.66"/>
<rect x="715.81" y="482.50" width="2.3" height="45.50" fill="#3a8ad4" fill-opacity="0.64"/>
<rect x="716.41" y="518.90" width="2.5" height="9.10" fill="#2cc0a8" fill-opacity="0.66"/>
<rect x="719.14" y="496.15" width="2.3" height="31.85" fill="#3a8ad4" fill-opacity="0.64"/>
<rect x="719.74" y="518.90" width="2.5" height="9.10" fill="#2cc0a8" fill-opacity="0.66"/>
<rect x="722.47" y="509.80" width="2.3" height="18.20" fill="#3a8ad4" fill-opacity="0.64"/>
<rect x="723.07" y="518.90" width="2.5" height="9.10" fill="#2cc0a8" fill-opacity="0.66"/>
<rect x="725.81" y="491.60" width="2.3" height="36.40" fill="#3a8ad4" fill-opacity="0.64"/>
<rect x="726.40" y="514.35" width="2.5" height="13.65" fill="#2cc0a8" fill-opacity="0.66"/>
<rect x="729.14" y="509.80" width="2.3" height="18.20" fill="#3a8ad4" fill-opacity="0.64"/>
<rect x="729.74" y="523.45" width="2.5" height="4.55" fill="#2cc0a8" fill-opacity="0.66"/>
<rect x="732.47" y="482.50" width="2.3" height="45.50" fill="#3a8ad4" fill-opacity="0.64"/>
<rect x="733.07" y="505.25" width="2.5" height="22.75" fill="#2cc0a8" fill-opacity="0.66"/>
<rect x="735.80" y="496.15" width="2.3" height="31.85" fill="#3a8ad4" fill-opacity="0.64"/>
<rect x="736.40" y="509.80" width="2.5" height="18.20" fill="#2cc0a8" fill-opacity="0.66"/>
<rect x="739.14" y="505.25" width="2.3" height="22.75" fill="#3a8ad4" fill-opacity="0.64"/>
<rect x="739.74" y="514.35" width="2.5" height="13.65" fill="#2cc0a8" fill-opacity="0.66"/>
<rect x="742.47" y="496.15" width="2.3" height="31.85" fill="#3a8ad4" fill-opacity="0.64"/>
<rect x="743.07" y="514.35" width="2.5" height="13.65" fill="#2cc0a8" fill-opacity="0.66"/>
<rect x="745.80" y="505.25" width="2.3" height="22.75" fill="#3a8ad4" fill-opacity="0.64"/>
<rect x="746.40" y="514.35" width="2.5" height="13.65" fill="#2cc0a8" fill-opacity="0.66"/>
<rect x="749.14" y="496.15" width="2.3" height="31.85" fill="#3a8ad4" fill-opacity="0.64"/>
<rect x="752.47" y="496.15" width="2.3" height="31.85" fill="#3a8ad4" fill-opacity="0.64"/>
<rect x="755.80" y="496.15" width="2.3" height="31.85" fill="#3a8ad4" fill-opacity="0.64"/>
<rect x="756.40" y="514.35" width="2.5" height="13.65" fill="#2cc0a8" fill-opacity="0.66"/>
<path d="M286.10 628.60V621.00M283.20 623.90L286.10 620.90L289.00 623.90" fill="none" stroke="#30ba85" stroke-width="1.1" stroke-linecap="round" stroke-linejoin="round"/>
<path d="M409.00 628.60V621.00M406.10 623.90L409.00 620.90L411.90 623.90" fill="none" stroke="#30ba85" stroke-width="1.1" stroke-linecap="round" stroke-linejoin="round"/>
<path d="M579.70 628.60V621.00M576.80 623.90L579.70 620.90L582.60 623.90" fill="none" stroke="#30ba85" stroke-width="1.1" stroke-linecap="round" stroke-linejoin="round"/>
<path d="M711.90 628.60V621.00M709.00 623.90L711.90 620.90L714.80 623.90" fill="none" stroke="#30ba85" stroke-width="1.1" stroke-linecap="round" stroke-linejoin="round"/>
<path d="M128.60 718.60V711.00M125.70 713.90L128.60 710.90L131.50 713.90" fill="none" stroke="#30ba85" stroke-width="1.1" stroke-linecap="round" stroke-linejoin="round"/>
<path d="M242.30 718.60V711.00M239.40 713.90L242.30 710.90L245.20 713.90" fill="none" stroke="#30ba85" stroke-width="1.1" stroke-linecap="round" stroke-linejoin="round"/>
<path d="M401.90 718.60V711.00M399.00 713.90L401.90 710.90L404.80 713.90" fill="none" stroke="#30ba85" stroke-width="1.1" stroke-linecap="round" stroke-linejoin="round"/>
<path d="M591.10 718.60V711.00M588.20 713.90L591.10 710.90L594.00 713.90" fill="none" stroke="#30ba85" stroke-width="1.1" stroke-linecap="round" stroke-linejoin="round"/>
<path d="M725.80 718.60V711.00M722.90 713.90L725.80 710.90L728.70 713.90" fill="none" stroke="#30ba85" stroke-width="1.1" stroke-linecap="round" stroke-linejoin="round"/>
<g transform="translate(137.6,588.0) scale(0.92)"><path d="M0 -5.4l1.7 1.1 2 -.1 .6 1.9 1.6 1.2 -.7 1.9 .7 1.9 -1.6 1.2 -.6 1.9 -2 -.1 -1.7 1.1 -1.7 -1.1 -2 .1 -.6 -1.9 -1.6 -1.2 .7 -1.9 -.7 -1.9 1.6 -1.2 .6 -1.9 2 .1z" fill="#2d98ea" transform="translate(0,0.5)"/><path d="M-2.3 0.6L-0.7 2.2L2.4 -1.2" fill="none" stroke="#10406e" stroke-width="1.3" stroke-linecap="round" stroke-linejoin="round"/></g>
</svg>
<div class="t" style="left:48.60px;top:5px;font-size:12px;color:#e7e9ea;font-weight:700;transform:scaleX(1.0098);">Overview</div>
<div class="t" style="left:192.20px;top:5px;font-size:12px;color:#71767b;font-weight:700;transform:scaleX(0.9738);">Audience</div>
<div class="t" style="left:334.80px;top:5px;font-size:12px;color:#71767b;font-weight:700;">Content</div>
<div class="t" style="left:469.90px;top:5px;font-size:12px;color:#71767b;font-weight:700;transform:scaleX(0.9732);">Video</div>
<div class="t" style="left:591.30px;top:5px;font-size:12px;color:#71767b;font-weight:700;transform:scaleX(0.8953);">Live</div>
<div class="t" style="left:702.70px;top:5px;font-size:12px;color:#71767b;font-weight:700;transform:scaleX(0.9636);">Spaces</div>
<div class="t" style="left:16.70px;top:49px;font-size:16px;color:#e7e9ea;font-weight:700;-webkit-text-stroke:0.25px #e7e9ea;">Account overview</div>
<div class="t" style="left:360.40px;top:54px;font-size:11.2px;color:#0f1419;font-weight:700;transform:scaleX(1.1481);">01/01/2026 - 04/05/2026</div>
<div class="t" style="left:524.39px;top:54px;font-size:11.2px;color:#e7e9ea;font-weight:700;-webkit-text-stroke:0.25px #e7e9ea;">7D</div>
<div class="t" style="left:571.96px;top:54px;font-size:11.2px;color:#e7e9ea;font-weight:700;-webkit-text-stroke:0.25px #e7e9ea;">2W</div>
<div class="t" style="left:623.01px;top:54px;font-size:11.2px;color:#e7e9ea;font-weight:700;-webkit-text-stroke:0.25px #e7e9ea;">4W</div>
<div class="t" style="left:673.98px;top:54px;font-size:11.2px;color:#e7e9ea;font-weight:700;-webkit-text-stroke:0.25px #e7e9ea;">3M</div>
<div class="t" style="left:722.51px;top:54px;font-size:11.2px;color:#e7e9ea;font-weight:700;-webkit-text-stroke:0.25px #e7e9ea;">1Y</div>
<div class="t" style="left:40.00px;top:109px;font-size:11px;color:#e7e9ea;font-weight:700;transform:scaleX(1.0152);">Impressions</div>
<div class="t" style="left:158.20px;top:109px;font-size:11px;color:#6b7075;font-weight:700;transform:scaleX(1.0365);">Select secondary metric</div>
<div class="t" style="left:32.05px;top:144px;font-size:9.4px;color:#71767b;">20M</div>
<div class="t" style="left:32.05px;top:194px;font-size:9.4px;color:#71767b;">15M</div>
<div class="t" style="left:32.05px;top:246px;font-size:9.4px;color:#71767b;">10M</div>
<div class="t" style="left:37.27px;top:298px;font-size:9.4px;color:#71767b;">5M</div>
<div class="t" style="left:45.08px;top:350px;font-size:9.4px;color:#71767b;">0</div>
<div class="t" style="left:49.90px;top:365px;font-size:8.5px;color:#71767b;-webkit-text-stroke:0.2px #71767b;">Jan 1</div>
<div class="t" style="left:101.70px;top:365px;font-size:8.5px;color:#71767b;-webkit-text-stroke:0.2px #71767b;">Jan 8</div>
<div class="t" style="left:151.13px;top:365px;font-size:8.5px;color:#71767b;-webkit-text-stroke:0.2px #71767b;">Jan 15</div>
<div class="t" style="left:202.93px;top:365px;font-size:8.5px;color:#71767b;-webkit-text-stroke:0.2px #71767b;">Jan 22</div>
<div class="t" style="left:254.73px;top:365px;font-size:8.5px;color:#71767b;-webkit-text-stroke:0.2px #71767b;">Jan 29</div>
<div class="t" style="left:308.43px;top:365px;font-size:8.5px;color:#71767b;-webkit-text-stroke:0.2px #71767b;">Feb 5</div>
<div class="t" style="left:357.87px;top:365px;font-size:8.5px;color:#71767b;-webkit-text-stroke:0.2px #71767b;">Feb 12</div>
<div class="t" style="left:409.67px;top:365px;font-size:8.5px;color:#71767b;-webkit-text-stroke:0.2px #71767b;">Feb 19</div>
<div class="t" style="left:468.87px;top:365px;font-size:8.5px;color:#71767b;-webkit-text-stroke:0.2px #71767b;">Feb 27</div>
<div class="t" style="left:523.03px;top:365px;font-size:8.5px;color:#71767b;-webkit-text-stroke:0.2px #71767b;">Mar 6</div>
<div class="t" style="left:572.47px;top:365px;font-size:8.5px;color:#71767b;-webkit-text-stroke:0.2px #71767b;">Mar 13</div>
<div class="t" style="left:631.67px;top:365px;font-size:8.5px;color:#71767b;-webkit-text-stroke:0.2px #71767b;">Mar 21</div>
<div class="t" style="left:690.87px;top:365px;font-size:8.5px;color:#71767b;-webkit-text-stroke:0.2px #71767b;">Mar 29</div>
<div class="t" style="left:745.54px;top:365px;font-size:8.5px;color:#71767b;-webkit-text-stroke:0.2px #71767b;">Apr 5</div>
<div class="t" style="left:30.30px;top:412px;font-size:12.2px;color:#e2e4e5;font-weight:700;transform:scaleX(0.9461);">Follows over time</div>
<div class="t" style="left:31.69px;top:443px;font-size:9.2px;color:#71767b;">2.8K</div>
<div class="t" style="left:31.69px;top:481px;font-size:9.2px;color:#71767b;">1.2K</div>
<div class="t" style="left:35.26px;top:503px;font-size:9.2px;color:#71767b;">317</div>
<div class="t" style="left:32.21px;top:523px;font-size:9.2px;color:#71767b;">-533</div>
<div class="t" style="left:48.20px;top:539px;font-size:8.5px;color:#71767b;-webkit-text-stroke:0.2px #71767b;">Jan 1</div>
<div class="t" style="left:95.96px;top:539px;font-size:8.5px;color:#71767b;-webkit-text-stroke:0.2px #71767b;">Jan 16</div>
<div class="t" style="left:151.33px;top:539px;font-size:8.5px;color:#71767b;-webkit-text-stroke:0.2px #71767b;">Feb 1</div>
<div class="t" style="left:199.10px;top:539px;font-size:8.5px;color:#71767b;-webkit-text-stroke:0.2px #71767b;">Feb 16</div>
<div class="t" style="left:251.59px;top:539px;font-size:8.5px;color:#71767b;-webkit-text-stroke:0.2px #71767b;">Mar 3</div>
<div class="t" style="left:302.70px;top:539px;font-size:8.5px;color:#71767b;-webkit-text-stroke:0.2px #71767b;">Mar 19</div>
<div class="t" style="left:355.90px;top:539px;font-size:8.5px;color:#71767b;-webkit-text-stroke:0.2px #71767b;">Apr 3</div>
<div class="t" style="left:425.90px;top:415px;font-size:11px;color:#e2e4e5;font-weight:700;transform:scaleX(0.9710);">Posts</div>
<div class="t" style="left:481.80px;top:415px;font-size:11px;color:#e2e4e5;font-weight:700;transform:scaleX(0.9836);">Replies</div>
<div class="t" style="left:426.70px;top:445px;font-size:9.2px;color:#71767b;transform:scaleX(0.9087);">18</div>
<div class="t" style="left:426.70px;top:470px;font-size:9.2px;color:#71767b;transform:scaleX(0.9087);">12</div>
<div class="t" style="left:430.88px;top:497px;font-size:9.2px;color:#71767b;">6</div>
<div class="t" style="left:430.88px;top:524px;font-size:9.2px;color:#71767b;">0</div>
<div class="t" style="left:430.20px;top:539px;font-size:8.5px;color:#71767b;-webkit-text-stroke:0.2px #71767b;">Jan 1</div>
<div class="t" style="left:477.93px;top:539px;font-size:8.5px;color:#71767b;-webkit-text-stroke:0.2px #71767b;">Jan 16</div>
<div class="t" style="left:532.73px;top:539px;font-size:8.5px;color:#71767b;-webkit-text-stroke:0.2px #71767b;">Feb 1</div>
<div class="t" style="left:580.47px;top:539px;font-size:8.5px;color:#71767b;-webkit-text-stroke:0.2px #71767b;">Feb 16</div>
<div class="t" style="left:632.83px;top:539px;font-size:8.5px;color:#71767b;-webkit-text-stroke:0.2px #71767b;">Mar 3</div>
<div class="t" style="left:683.57px;top:539px;font-size:8.5px;color:#71767b;-webkit-text-stroke:0.2px #71767b;">Mar 19</div>
<div class="t" style="left:736.34px;top:539px;font-size:8.5px;color:#71767b;-webkit-text-stroke:0.2px #71767b;">Apr 3</div>
<div class="t" style="left:30.30px;top:582px;font-size:13.1px;color:#d0d3d6;-webkit-text-stroke:0.4px #d0d3d6;transform:scaleX(0.9840);">Verified followers</div>
<div class="t" style="left:29.90px;top:610px;font-size:24.4px;color:#e7e9ea;font-weight:700;-webkit-text-stroke:0.3px #e7e9ea;transform:scaleX(1.0247);">22.1K</div>
<div class="t" style="left:184.00px;top:582px;font-size:13.1px;color:#d0d3d6;-webkit-text-stroke:0.4px #d0d3d6;transform:scaleX(0.9746);">Impressions</div>
<div class="t" style="left:183.60px;top:610px;font-size:24.4px;color:#e7e9ea;font-weight:700;-webkit-text-stroke:0.3px #e7e9ea;transform:scaleX(1.1283);">487.8M</div>
<div class="t" style="left:292.30px;top:622px;font-size:10.3px;color:#30ba85;-webkit-text-stroke:0.2px #30ba85;transform:scaleX(1.0481);">76%</div>
<div class="t" style="left:338.20px;top:582px;font-size:13.1px;color:#d0d3d6;-webkit-text-stroke:0.4px #d0d3d6;transform:scaleX(0.9456);">Engagement rate</div>
<div class="t" style="left:337.80px;top:610px;font-size:24.4px;color:#e7e9ea;font-weight:700;-webkit-text-stroke:0.3px #e7e9ea;transform:scaleX(1.0865);">6.2%</div>
<div class="t" style="left:414.90px;top:622px;font-size:10.3px;color:#30ba85;-webkit-text-stroke:0.2px #30ba85;transform:scaleX(1.0816);">3.2%</div>
<div class="t" style="left:492.80px;top:582px;font-size:13.1px;color:#d0d3d6;-webkit-text-stroke:0.4px #d0d3d6;transform:scaleX(0.9392);">Engagements</div>
<div class="t" style="left:492.40px;top:610px;font-size:24.4px;color:#e7e9ea;font-weight:700;-webkit-text-stroke:0.3px #e7e9ea;transform:scaleX(1.1328);">30.6M</div>
<div class="t" style="left:586.50px;top:622px;font-size:10.3px;color:#30ba85;-webkit-text-stroke:0.2px #30ba85;transform:scaleX(1.0772);">82%</div>
<div class="t" style="left:647.00px;top:582px;font-size:13.1px;color:#d0d3d6;-webkit-text-stroke:0.4px #d0d3d6;transform:scaleX(0.9848);">Profile visits</div>
<div class="t" style="left:646.60px;top:610px;font-size:24.4px;color:#e7e9ea;font-weight:700;-webkit-text-stroke:0.3px #e7e9ea;transform:scaleX(1.0141);">1.7M</div>
<div class="t" style="left:718.60px;top:622px;font-size:10.3px;color:#30ba85;-webkit-text-stroke:0.2px #30ba85;transform:scaleX(1.0335);">57%</div>
<div class="t" style="left:30.30px;top:671px;font-size:13.1px;color:#d0d3d6;-webkit-text-stroke:0.4px #d0d3d6;transform:scaleX(0.9274);">Replies</div>
<div class="t" style="left:29.90px;top:700px;font-size:24.4px;color:#e7e9ea;font-weight:700;-webkit-text-stroke:0.3px #e7e9ea;transform:scaleX(1.1112);">305.8K</div>
<div class="t" style="left:134.60px;top:712px;font-size:10.3px;color:#30ba85;-webkit-text-stroke:0.2px #30ba85;transform:scaleX(1.0529);">52%</div>
<div class="t" style="left:184.00px;top:671px;font-size:13.1px;color:#d0d3d6;-webkit-text-stroke:0.4px #d0d3d6;transform:scaleX(0.9353);">Likes</div>
<div class="t" style="left:183.60px;top:700px;font-size:24.4px;color:#e7e9ea;font-weight:700;-webkit-text-stroke:0.3px #e7e9ea;transform:scaleX(1.0052);">17M</div>
<div class="t" style="left:248.00px;top:712px;font-size:10.3px;color:#30ba85;-webkit-text-stroke:0.2px #30ba85;transform:scaleX(1.0970);">140%</div>
<div class="t" style="left:338.20px;top:671px;font-size:13.1px;color:#d0d3d6;-webkit-text-stroke:0.4px #d0d3d6;transform:scaleX(0.9532);">Reposts</div>
<div class="t" style="left:337.80px;top:700px;font-size:24.4px;color:#e7e9ea;font-weight:700;-webkit-text-stroke:0.3px #e7e9ea;transform:scaleX(0.9846);">1.1M</div>
<div class="t" style="left:408.10px;top:712px;font-size:10.3px;color:#30ba85;-webkit-text-stroke:0.2px #30ba85;transform:scaleX(0.9794);">177%</div>
<div class="t" style="left:492.80px;top:671px;font-size:13.1px;color:#d0d3d6;-webkit-text-stroke:0.4px #d0d3d6;transform:scaleX(0.9664);">Bookmarks</div>
<div class="t" style="left:492.40px;top:700px;font-size:24.4px;color:#e7e9ea;font-weight:700;-webkit-text-stroke:0.3px #e7e9ea;transform:scaleX(1.1277);">470.4K</div>
<div class="t" style="left:597.30px;top:712px;font-size:10.3px;color:#30ba85;-webkit-text-stroke:0.2px #30ba85;transform:scaleX(0.9832);">121%</div>
<div class="t" style="left:647.00px;top:671px;font-size:13.1px;color:#d0d3d6;-webkit-text-stroke:0.4px #d0d3d6;transform:scaleX(0.9325);">Shares</div>
<div class="t" style="left:646.60px;top:700px;font-size:24.4px;color:#e7e9ea;font-weight:700;-webkit-text-stroke:0.3px #e7e9ea;transform:scaleX(1.0631);">47.7K</div>
<div class="t" style="left:731.80px;top:712px;font-size:10.3px;color:#30ba85;-webkit-text-stroke:0.2px #30ba85;transform:scaleX(1.0097);">178%</div>
<div class="t" style="left:103.80px;top:621px;font-size:11px;color:#d0d3d6;-webkit-text-stroke:0.4px #d0d3d6;transform:scaleX(1.0334);">/ 1.6M</div>
<section>
<div class="b" style="left:428.20px;top:71.40px;width:320.80px;height:200.60px;background:#000;border-radius:5px;border:1px solid #25282c;box-sizing:border-box;"></div>
<div class="b" style="left:434.80px;top:134.20px;width:147.40px;height:21.30px;background:#202327;border-radius:6px;"></div>
<div class="b" style="left:595.20px;top:134.20px;width:147.00px;height:21.30px;background:#202327;border-radius:6px;"></div>
<div class="b" style="left:434.80px;top:161.60px;width:147.40px;height:21.30px;background:#202327;border-radius:6px;"></div>
<div class="b" style="left:595.20px;top:162.00px;width:20.70px;height:20.50px;background:#e7e9ea;border-radius:4.5px;"></div>
<div class="b" style="left:434.80px;top:189.00px;width:147.40px;height:21.30px;background:#202327;border-radius:6px;"></div>
<div class="b" style="left:434.80px;top:216.40px;width:147.40px;height:21.30px;background:#202327;border-radius:6px;"></div>
<div class="b" style="left:434.80px;top:243.70px;width:147.40px;height:21.30px;background:#202327;border-radius:6px;"></div>
<svg width="790" height="744" viewBox="0 0 790 744">
<path d="M444.0 85.1L439.8 88.8L444.0 92.5" fill="none" stroke="#e7e9ea" stroke-width="1.4" stroke-linecap="round" stroke-linejoin="round"/>
<path d="M726.4 85.3L730.4 88.9L726.4 92.5" fill="none" stroke="#9a9fa4" stroke-width="1.3" stroke-linecap="round" stroke-linejoin="round"/>
</svg>
<div class="t" style="left:474.70px;top:83px;font-size:12.2px;color:#e7e9ea;font-weight:700;transform:scaleX(1.0240);">March 2026</div>
<div class="t" style="left:639.20px;top:83px;font-size:12.2px;color:#e7e9ea;font-weight:700;transform:scaleX(1.0092);">April 2026</div>
<div class="t" style="left:439.08px;top:116px;font-size:10px;color:#6b7075;">Su</div>
<div class="t" style="left:599.28px;top:116px;font-size:10px;color:#6b7075;">Su</div>
<div class="t" style="left:459.31px;top:116px;font-size:10px;color:#6b7075;">Mo</div>
<div class="t" style="left:619.45px;top:116px;font-size:10px;color:#6b7075;">Mo</div>
<div class="t" style="left:481.66px;top:116px;font-size:10px;color:#6b7075;">Tu</div>
<div class="t" style="left:641.74px;top:116px;font-size:10px;color:#6b7075;">Tu</div>
<div class="t" style="left:500.97px;top:116px;font-size:10px;color:#6b7075;">We</div>
<div class="t" style="left:660.99px;top:116px;font-size:10px;color:#6b7075;">We</div>
<div class="t" style="left:523.60px;top:116px;font-size:10px;color:#6b7075;">Th</div>
<div class="t" style="left:683.56px;top:116px;font-size:10px;color:#6b7075;">Th</div>
<div class="t" style="left:545.77px;top:116px;font-size:10px;color:#6b7075;">Fr</div>
<div class="t" style="left:705.67px;top:116px;font-size:10px;color:#6b7075;">Fr</div>
<div class="t" style="left:565.44px;top:116px;font-size:10px;color:#6b7075;">Sa</div>
<div class="t" style="left:725.28px;top:116px;font-size:10px;color:#6b7075;">Sa</div>
<div class="t" style="left:442.03px;top:141px;font-size:11.4px;color:#e7e9ea;font-weight:700;">1</div>
<div class="t" style="left:463.09px;top:141px;font-size:11.4px;color:#e7e9ea;font-weight:700;">2</div>
<div class="t" style="left:484.15px;top:141px;font-size:11.4px;color:#e7e9ea;font-weight:700;">3</div>
<div class="t" style="left:505.21px;top:141px;font-size:11.4px;color:#e7e9ea;font-weight:700;">4</div>
<div class="t" style="left:526.27px;top:141px;font-size:11.4px;color:#e7e9ea;font-weight:700;">5</div>
<div class="t" style="left:547.33px;top:141px;font-size:11.4px;color:#e7e9ea;font-weight:700;">6</div>
<div class="t" style="left:568.39px;top:141px;font-size:11.4px;color:#e7e9ea;font-weight:700;">7</div>
<div class="t" style="left:599.06px;top:141px;font-size:11.4px;color:#e7e9ea;font-weight:700;">29</div>
<div class="t" style="left:620.06px;top:141px;font-size:11.4px;color:#e7e9ea;font-weight:700;">30</div>
<div class="t" style="left:641.06px;top:141px;font-size:11.4px;color:#e7e9ea;font-weight:700;">31</div>
<div class="t" style="left:665.23px;top:141px;font-size:11.4px;color:#e7e9ea;font-weight:700;">1</div>
<div class="t" style="left:686.23px;top:141px;font-size:11.4px;color:#e7e9ea;font-weight:700;">2</div>
<div class="t" style="left:707.23px;top:141px;font-size:11.4px;color:#e7e9ea;font-weight:700;">3</div>
<div class="t" style="left:728.23px;top:141px;font-size:11.4px;color:#e7e9ea;font-weight:700;">4</div>
<div class="t" style="left:442.03px;top:169px;font-size:11.4px;color:#e7e9ea;font-weight:700;">8</div>
<div class="t" style="left:463.09px;top:169px;font-size:11.4px;color:#e7e9ea;font-weight:700;">9</div>
<div class="t" style="left:480.98px;top:169px;font-size:11.4px;color:#e7e9ea;font-weight:700;">10</div>
<div class="t" style="left:502.36px;top:169px;font-size:11.4px;color:#e7e9ea;font-weight:700;">11</div>
<div class="t" style="left:523.10px;top:169px;font-size:11.4px;color:#e7e9ea;font-weight:700;">12</div>
<div class="t" style="left:544.16px;top:169px;font-size:11.4px;color:#e7e9ea;font-weight:700;">13</div>
<div class="t" style="left:565.22px;top:169px;font-size:11.4px;color:#e7e9ea;font-weight:700;">14</div>
<div class="t" style="left:602.23px;top:169px;font-size:11.4px;color:#53575b;">5</div>
<div class="t" style="left:623.23px;top:169px;font-size:11.4px;color:#474a4e;">6</div>
<div class="t" style="left:644.23px;top:169px;font-size:11.4px;color:#474a4e;">7</div>
<div class="t" style="left:665.23px;top:169px;font-size:11.4px;color:#474a4e;">8</div>
<div class="t" style="left:686.23px;top:169px;font-size:11.4px;color:#474a4e;">9</div>
<div class="t" style="left:704.06px;top:169px;font-size:11.4px;color:#474a4e;">10</div>
<div class="t" style="left:725.49px;top:169px;font-size:11.4px;color:#474a4e;">11</div>
<div class="t" style="left:438.86px;top:196px;font-size:11.4px;color:#e7e9ea;font-weight:700;">15</div>
<div class="t" style="left:459.92px;top:196px;font-size:11.4px;color:#e7e9ea;font-weight:700;">16</div>
<div class="t" style="left:480.98px;top:196px;font-size:11.4px;color:#e7e9ea;font-weight:700;">17</div>
<div class="t" style="left:502.04px;top:196px;font-size:11.4px;color:#e7e9ea;font-weight:700;">18</div>
<div class="t" style="left:523.10px;top:196px;font-size:11.4px;color:#e7e9ea;font-weight:700;">19</div>
<div class="t" style="left:544.16px;top:196px;font-size:11.4px;color:#e7e9ea;font-weight:700;">20</div>
<div class="t" style="left:565.22px;top:196px;font-size:11.4px;color:#e7e9ea;font-weight:700;">21</div>
<div class="t" style="left:599.06px;top:196px;font-size:11.4px;color:#474a4e;">12</div>
<div class="t" style="left:620.06px;top:196px;font-size:11.4px;color:#474a4e;">13</div>
<div class="t" style="left:641.06px;top:196px;font-size:11.4px;color:#474a4e;">14</div>
<div class="t" style="left:662.06px;top:196px;font-size:11.4px;color:#474a4e;">15</div>
<div class="t" style="left:683.06px;top:196px;font-size:11.4px;color:#474a4e;">16</div>
<div class="t" style="left:704.06px;top:196px;font-size:11.4px;color:#474a4e;">17</div>
<div class="t" style="left:725.06px;top:196px;font-size:11.4px;color:#474a4e;">18</div>
<div class="t" style="left:438.86px;top:223px;font-size:11.4px;color:#e7e9ea;font-weight:700;">22</div>
<div class="t" style="left:459.92px;top:223px;font-size:11.4px;color:#e7e9ea;font-weight:700;">23</div>
<div class="t" style="left:480.98px;top:223px;font-size:11.4px;color:#e7e9ea;font-weight:700;">24</div>
<div class="t" style="left:502.04px;top:223px;font-size:11.4px;color:#e7e9ea;font-weight:700;">25</div>
<div class="t" style="left:523.10px;top:223px;font-size:11.4px;color:#e7e9ea;font-weight:700;">26</div>
<div class="t" style="left:544.16px;top:223px;font-size:11.4px;color:#e7e9ea;font-weight:700;">27</div>
<div class="t" style="left:565.22px;top:223px;font-size:11.4px;color:#e7e9ea;font-weight:700;">28</div>
<div class="t" style="left:599.06px;top:223px;font-size:11.4px;color:#474a4e;">19</div>
<div class="t" style="left:620.06px;top:223px;font-size:11.4px;color:#474a4e;">20</div>
<div class="t" style="left:641.06px;top:223px;font-size:11.4px;color:#474a4e;">21</div>
<div class="t" style="left:662.06px;top:223px;font-size:11.4px;color:#474a4e;">22</div>
<div class="t" style="left:683.06px;top:223px;font-size:11.4px;color:#474a4e;">23</div>
<div class="t" style="left:704.06px;top:223px;font-size:11.4px;color:#474a4e;">24</div>
<div class="t" style="left:725.06px;top:223px;font-size:11.4px;color:#474a4e;">25</div>
<div class="t" style="left:438.86px;top:251px;font-size:11.4px;color:#e7e9ea;font-weight:700;">29</div>
<div class="t" style="left:459.92px;top:251px;font-size:11.4px;color:#e7e9ea;font-weight:700;">30</div>
<div class="t" style="left:480.98px;top:251px;font-size:11.4px;color:#e7e9ea;font-weight:700;">31</div>
<div class="t" style="left:505.21px;top:251px;font-size:11.4px;color:#e7e9ea;font-weight:700;">1</div>
<div class="t" style="left:526.27px;top:251px;font-size:11.4px;color:#e7e9ea;font-weight:700;">2</div>
<div class="t" style="left:547.33px;top:251px;font-size:11.4px;color:#e7e9ea;font-weight:700;">3</div>
<div class="t" style="left:568.39px;top:251px;font-size:11.4px;color:#e7e9ea;font-weight:700;">4</div>
<div class="t" style="left:599.06px;top:251px;font-size:11.4px;color:#474a4e;">26</div>
<div class="t" style="left:620.06px;top:251px;font-size:11.4px;color:#474a4e;">27</div>
<div class="t" style="left:641.06px;top:251px;font-size:11.4px;color:#474a4e;">28</div>
<div class="t" style="left:662.06px;top:251px;font-size:11.4px;color:#474a4e;">29</div>
<div class="t" style="left:683.06px;top:251px;font-size:11.4px;color:#474a4e;">30</div>
</section>
</main>
</body>
</html>
